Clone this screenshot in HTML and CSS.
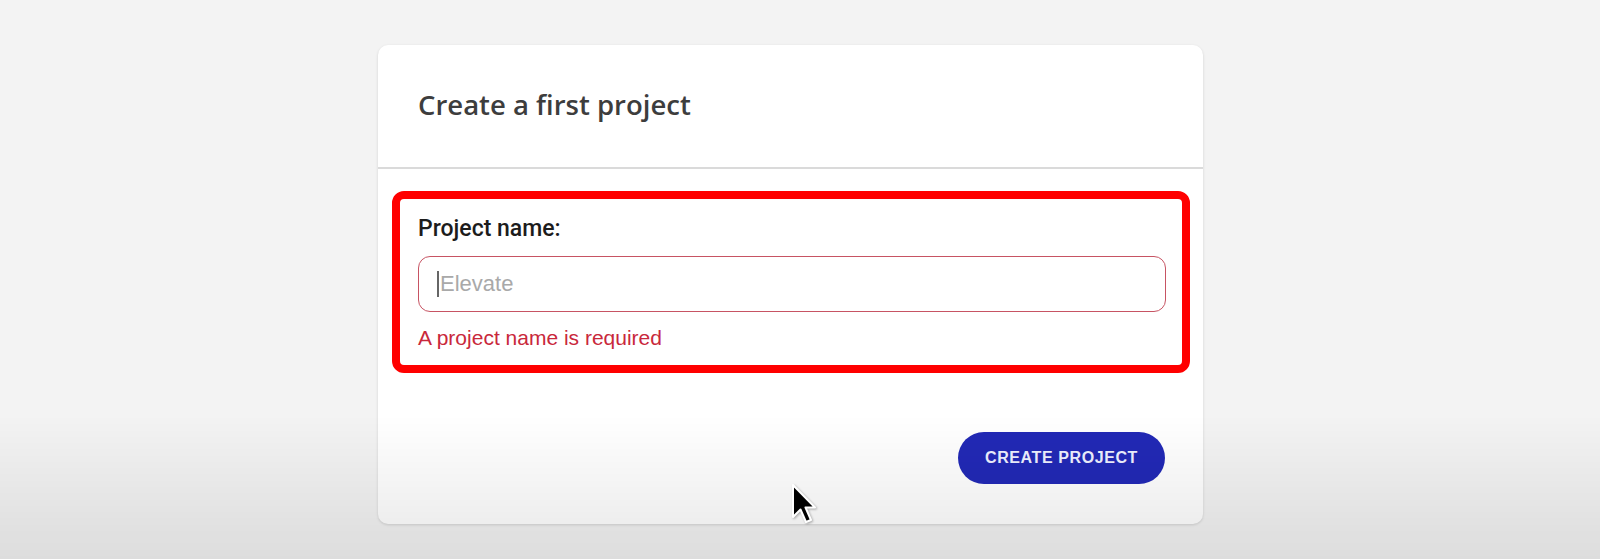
FILE: index.html
```html
<!DOCTYPE html>
<html lang="en">
<head>
<meta charset="utf-8">
<title>Create a first project</title>
<link rel="stylesheet" href="styles.css">
</head>
<body>
<main class="page">
  <section class="card">
    <header class="card-header">
      <h1 class="title">Create a first project</h1>
    </header>
    <div class="card-body">
      <div class="highlight">
        <label class="label">Project name:</label>
        <div class="input">
          <span class="caret"></span>
          <span class="placeholder">Elevate</span>
        </div>
        <p class="error">A project name is required</p>
      </div>
      <div class="actions">
        <button class="btn">CREATE PROJECT</button>
      </div>
    </div>
  </section>
</main>
<div class="vignette"></div>
<svg class="cursor" width="26" height="44" viewBox="0 0 26 44">
  <path d="M2 2 L2 34 L9.5 26.5 L15 39 L20 37 L14.5 24.5 L24 24.5 Z" fill="#000" stroke="#fff" stroke-width="2" stroke-linejoin="round"/>
</svg>
</body>
</html>
```

FILE: styles.css
```css
* { box-sizing: border-box; }
html, body {
  margin: 0;
  padding: 0;
  height: 559px;
  overflow: hidden;
}
body {
  background: #f3f3f3;
  font-family: "Liberation Sans", Arial, sans-serif;
}
.page {
  padding-top: 45px;
  padding-left: 378px;
}
.card {
  width: 825px;
  height: 479px;
  background: #ffffff;
  border-radius: 10px;
  box-shadow: 0 1px 3px rgba(0,0,0,0.14);
  overflow: hidden;
}
.card-header {
  padding: 42px 40px 0;
  height: 124px;
  border-bottom: 2px solid #dadada;
}
.title {
  margin: 0;
  font-family: "Open Sans", sans-serif;
  font-weight: 600;
  font-size: 27.5px;
  line-height: 36px;
  color: #3d3d3d;
}
.card-body {
  padding: 22px 13px 0 14px;
}
.highlight {
  border: 8px solid #ff0000;
  border-radius: 12px;
  padding: 16px 16px 15px 18px;
  display: flex;
  flex-direction: column;
}
.label {
  font-family: Roboto, "Liberation Sans", sans-serif;
  font-weight: 500;
  font-size: 23px;
  line-height: 27px;
  color: #1c1c1c;
}
.input {
  margin-top: 14px;
  height: 56px;
  border: 1.5px solid #c75463;
  border-radius: 12px;
  display: flex;
  align-items: center;
  padding-left: 18px;
}
.caret {
  width: 2px;
  height: 26px;
  background: #666;
  margin-right: 1px;
}
.placeholder {
  font-size: 22px;
  color: #a9a9a9;
}
.error {
  margin: 14px 0 0;
  font-size: 21px;
  line-height: 24px;
  color: #c9283b;
}
.actions {
  display: flex;
  justify-content: flex-end;
  padding-top: 59px;
  padding-right: 25px;
}
.btn {
  width: 207px;
  height: 52px;
  border: none;
  border-radius: 26px;
  background: #2229b6;
  color: #eef0ff;
  font-family: "Liberation Sans", Arial, sans-serif;
  font-weight: 700;
  font-size: 16px;
  letter-spacing: 0.6px;
  padding: 0;
}
.vignette {
  position: fixed;
  inset: 0;
  pointer-events: none;
  background: linear-gradient(to bottom, rgba(0,0,0,0) 0, rgba(0,0,0,0) 415px, rgba(0,0,0,0.09) 559px);
}
.cursor {
  position: absolute;
  left: 791px;
  top: 483px;
  filter: drop-shadow(1px 1px 1px rgba(0,0,0,0.3));
}
```
